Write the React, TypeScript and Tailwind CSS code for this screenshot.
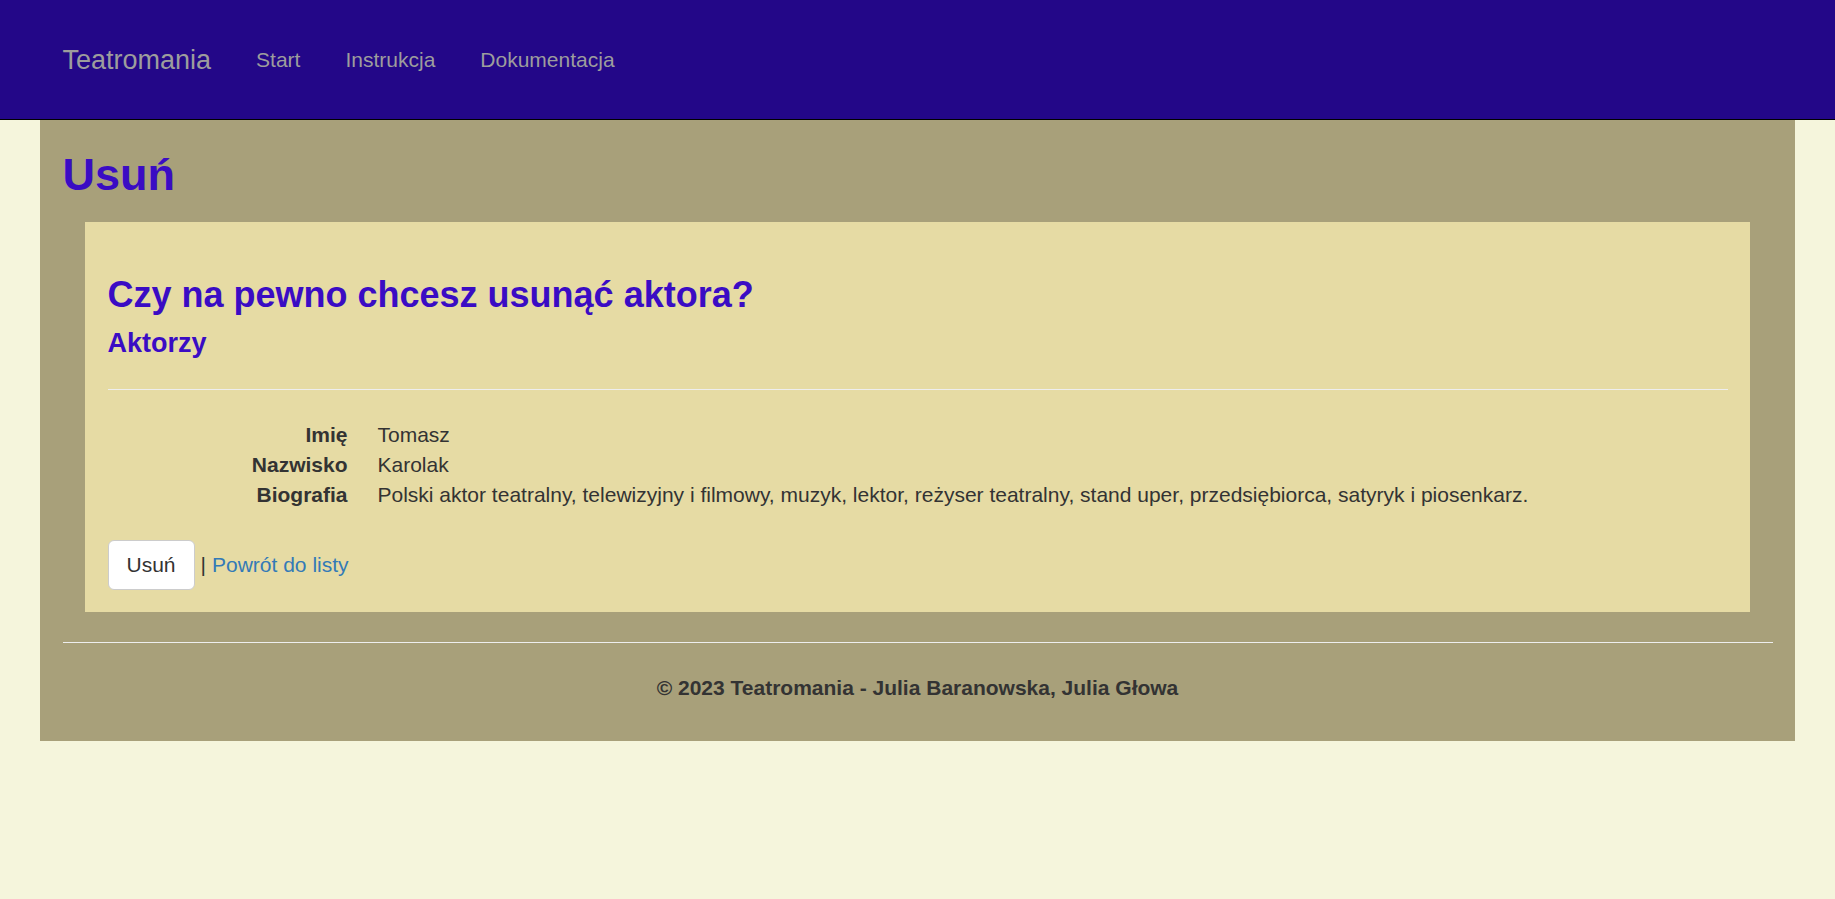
import React from 'react';

const font = { fontFamily: '"Liberation Sans", Arial, Helvetica, sans-serif' };

const details: [string, string][] = [
  ['Imię', 'Tomasz'],
  ['Nazwisko', 'Karolak'],
  [
    'Biografia',
    'Polski aktor teatralny, telewizyjny i filmowy, muzyk, lektor, reżyser teatralny, stand uper, przedsiębiorca, satyryk i piosenkarz.',
  ],
];

export default function App() {
  return (
    <div className="min-h-screen bg-[#f5f5dc] text-[21px] leading-[30px] text-[#333333]" style={font}>
      {/* NAVBAR */}
      <nav className="h-[120px] bg-[#230788] border-b border-black">
        <div className="w-[1755px] mx-auto px-[22.5px] h-[119px] flex items-center">
          <a className="text-[27px] leading-[30px] text-[#9d9d9d] pr-[22.5px]">Teatromania</a>
          <ul className="flex">
            {['Start', 'Instrukcja', 'Dokumentacja'].map((item) => (
              <li key={item}>
                <a className="block px-[22.5px] text-[#9d9d9d]">{item}</a>
              </li>
            ))}
          </ul>
        </div>
      </nav>

      {/* CONTENT */}
      <div className="w-[1755px] mx-auto bg-[#a8a07a] px-[22.5px] pt-[30px] pb-[38px]">
        <h2 className="text-[45px] leading-[1.1] font-bold text-[#3a0cc4] mb-[22.5px]">Usuń</h2>

        <div className="mx-[22.5px] bg-[#e6dba4] p-[22.5px]">
          <h3 className="text-[36px] leading-[1.1] font-bold text-[#3a0cc4] mt-[30px]">
            Czy na pewno chcesz usunąć aktora?
          </h3>
          <h4 className="text-[27px] leading-[1.1] font-bold text-[#3a0cc4] mt-[15px]">Aktorzy</h4>
          <hr className="mt-[30px] mb-[30px] border-0 border-t border-[#eeeeee]" />

          <dl className="mb-[30px]">
            {details.map(([label, value]) => (
              <div key={label} className="flex">
                <dt className="w-[240px] shrink-0 text-right font-bold">{label}</dt>
                <dd className="ml-[30px]">{value}</dd>
              </div>
            ))}
          </dl>

          <div className="flex items-center">
            <button className="bg-white border border-[#cccccc] rounded-[6px] px-[18px] py-[9px] text-[21px] leading-[30px] text-[#333333]">
              Usuń
            </button>
            <span className="ml-[6px]">|</span>
            <a className="ml-[6px] text-[#337ab7]">Powrót do listy</a>
          </div>
        </div>

        <hr className="mt-[30px] mb-[30px] border-0 border-t border-[#eeeeee]" />
        <footer>
          <p className="text-center font-bold">© 2023 Teatromania - Julia Baranowska, Julia Głowa</p>
        </footer>
      </div>
    </div>
  );
}
